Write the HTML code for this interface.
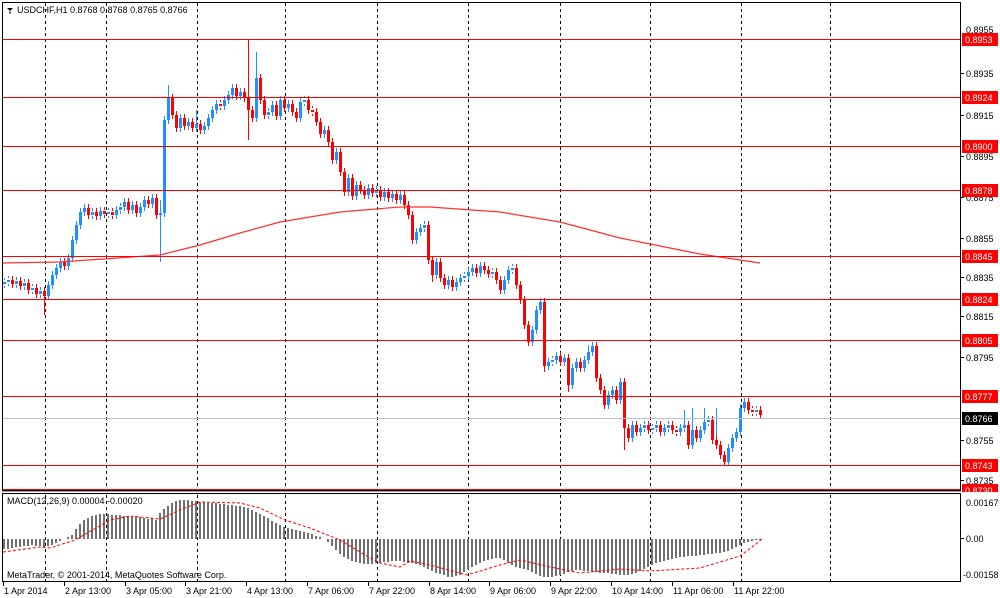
<!DOCTYPE html>
<html><head><meta charset="utf-8">
<style>
html,body{margin:0;padding:0;background:#fff;width:1000px;height:598px;overflow:hidden}
svg{display:block}
text{font-family:"Liberation Sans","DejaVu Sans",sans-serif;font-size:9px;fill:#000}
</style></head><body>
<svg width="1000" height="598" xmlns="http://www.w3.org/2000/svg">
<defs>
<path id="bb" d="M4.5 282v2M8.5 280v2M16.5 281v3M24.5 283v3M32.5 288v2M40.5 291v3M48.5 285v11M52.5 275v10M56.5 268v7M60.5 262v6M68.5 258v8M72.5 240v18M76.5 225v15M80.5 212v13M84.5 208v4M92.5 212v3M100.5 211v5M108.5 212v2M116.5 210v5M120.5 207v3M124.5 202v5M132.5 205v5M140.5 207v6M144.5 200v7M152.5 198v6M160.5 213v2M164.5 120v93M168.5 98v22M180.5 118v10M188.5 122v4M196.5 124v4M204.5 126v4M208.5 118v8M212.5 110v8M216.5 104v6M224.5 100v6M228.5 95v5M232.5 88v7M240.5 92v4M256.5 78v40M268.5 112v3M272.5 105v7M280.5 100v16M288.5 104v4M300.5 102v16M304.5 100v2M324.5 130v4M336.5 152v8M348.5 178v14M356.5 185v11M368.5 188v7M376.5 190v3M384.5 192v5M392.5 194v4M400.5 195v5M416.5 232v8M420.5 228v4M424.5 225v3M436.5 262v13M448.5 280v5M456.5 282v5M460.5 278v4M464.5 276v2M468.5 272v4M472.5 268v4M480.5 266v7M492.5 272v2M504.5 280v10M508.5 270v10M512.5 268v2M532.5 330v12M536.5 310v20M540.5 302v8M548.5 362v4M552.5 360v2M556.5 356v4M564.5 358v4M572.5 368v17M576.5 362v6M584.5 360v8M588.5 352v8M592.5 346v6M608.5 395v10M612.5 390v5M620.5 382v18M632.5 425v13M640.5 428v4M644.5 425v3M652.5 428v2M656.5 425v3M664.5 428v4M668.5 425v3M680.5 428v4M684.5 425v3M692.5 430v15M700.5 430v8M704.5 422v8M708.5 420v2M728.5 448v14M732.5 438v10M736.5 432v6M740.5 408v24M744.5 402v6M756.5 410v2"/>
<path id="rb" d="M12.5 280v4M20.5 281v5M28.5 283v7M36.5 288v6M44.5 291v5M64.5 262v4M88.5 208v7M96.5 212v4M104.5 211v3M112.5 212v3M128.5 202v8M136.5 205v8M148.5 200v4M156.5 198v17M172.5 98v17M176.5 115v13M184.5 118v8M192.5 122v6M200.5 124v6M220.5 104v2M236.5 88v8M244.5 92v6M248.5 98v12M252.5 110v8M260.5 78v22M264.5 100v15M276.5 105v11M284.5 100v8M292.5 104v8M296.5 112v6M308.5 100v10M312.5 110v2M316.5 112v10M320.5 122v12M328.5 130v12M332.5 142v18M340.5 152v20M344.5 172v20M352.5 178v18M360.5 185v5M364.5 190v5M372.5 188v5M380.5 190v7M388.5 192v6M396.5 194v6M404.5 195v10M408.5 205v10M412.5 215v25M428.5 225v35M432.5 260v15M440.5 262v16M444.5 278v7M452.5 280v7M476.5 268v5M484.5 266v4M488.5 270v4M496.5 272v8M500.5 280v10M516.5 268v17M520.5 285v15M524.5 300v25M528.5 325v17M544.5 302v64M560.5 356v6M568.5 358v27M580.5 362v6M596.5 346v32M600.5 378v12M604.5 390v15M616.5 390v10M624.5 382v46M628.5 428v10M636.5 425v7M648.5 425v5M660.5 425v7M672.5 425v5M676.5 430v2M688.5 425v20M696.5 430v8M712.5 420v20M716.5 440v5M720.5 445v10M724.5 455v7M748.5 402v8M752.5 410v2M760.5 410v5"/>
</defs>
<!-- grid -->
<g stroke="#000" stroke-dasharray="3,3">
<line x1="45.5" y1="3" x2="45.5" y2="582"/><line x1="106.5" y1="3" x2="106.5" y2="582"/><line x1="197.5" y1="3" x2="197.5" y2="582"/><line x1="285.5" y1="3" x2="285.5" y2="582"/><line x1="377.5" y1="3" x2="377.5" y2="582"/><line x1="468.5" y1="3" x2="468.5" y2="582"/><line x1="560.5" y1="3" x2="560.5" y2="582"/><line x1="650.5" y1="3" x2="650.5" y2="582"/><line x1="741.5" y1="3" x2="741.5" y2="582"/><line x1="830.5" y1="3" x2="830.5" y2="582"/>
</g>
<!-- candles -->
<g stroke="#1e90ff" fill="none">
<use href="#bb" transform="translate(0,-4)"/><use href="#bb" transform="translate(0,4)"/>
<use href="#bb" stroke-width="3"/>
<path d="M160.5 200V262M256.5 52V80M684.5 410V428M692.5 408V430M704.5 408V422M716.5 408V445M588.5 345V360M196.5 110V130M168.5 85V100"/>
</g>
<g stroke="#ff0000" fill="none">
<use href="#rb" transform="translate(0,-4)"/><use href="#rb" transform="translate(0,4)"/>
<use href="#rb" stroke-width="3"/>
<path d="M248.5 39V140M544.5 300V372M624.5 382V450M568.5 355V392M44.5 291V315M432.5 260V282"/>
</g>
<!-- MA -->
<polyline fill="none" stroke="#ff3030" stroke-width="1.2" points="2,263 60,262 160,255 200,245 240,233 280,222 340,212 400,207 430,207 500,212 560,222 620,238 700,254 760,263"/>
<!-- levels -->
<g stroke="#ff0000">
<line x1="2" y1="39.5" x2="960" y2="39.5"/><line x1="2" y1="97.5" x2="960" y2="97.5"/><line x1="2" y1="146.5" x2="960" y2="146.5"/><line x1="2" y1="190.5" x2="960" y2="190.5"/><line x1="2" y1="256.5" x2="960" y2="256.5"/><line x1="2" y1="299.5" x2="960" y2="299.5"/><line x1="2" y1="340.5" x2="960" y2="340.5"/><line x1="2" y1="396.5" x2="960" y2="396.5"/><line x1="2" y1="465.5" x2="960" y2="465.5"/><line x1="2" y1="489.5" x2="960" y2="489.5"/>
</g>
<line x1="2" y1="418.5" x2="960" y2="418.5" stroke="#c0c0c0"/>
<!-- right axis ticks -->
<g stroke="#000">
<line x1="960" y1="73.5" x2="964" y2="73.5"/><line x1="960" y1="115.5" x2="964" y2="115.5"/><line x1="960" y1="156.5" x2="964" y2="156.5"/><line x1="960" y1="197.5" x2="964" y2="197.5"/><line x1="960" y1="238.5" x2="964" y2="238.5"/><line x1="960" y1="277.5" x2="964" y2="277.5"/><line x1="960" y1="316.5" x2="964" y2="316.5"/><line x1="960" y1="357.5" x2="964" y2="357.5"/><line x1="960" y1="440.5" x2="964" y2="440.5"/><line x1="960" y1="480.5" x2="964" y2="480.5"/><line x1="960" y1="538.5" x2="964" y2="538.5"/>
</g>
<text x="966" y="33">0.8955</text><text x="966" y="77">0.8935</text><text x="966" y="119">0.8915</text><text x="966" y="160">0.8895</text><text x="966" y="201">0.8875</text><text x="966" y="242">0.8855</text><text x="966" y="281">0.8835</text><text x="966" y="320">0.8815</text><text x="966" y="361">0.8795</text><text x="966" y="403">0.8775</text><text x="966" y="444">0.8755</text><text x="966" y="484">0.8735</text>
<!-- price labels -->
<g fill="#ff0000">
<rect x="962" y="33" width="36" height="13"/><rect x="962" y="91" width="36" height="13"/><rect x="962" y="140" width="36" height="13"/><rect x="962" y="184" width="36" height="13"/><rect x="962" y="250" width="36" height="13"/><rect x="962" y="293" width="36" height="13"/><rect x="962" y="334" width="36" height="13"/><rect x="962" y="390" width="36" height="13"/><rect x="962" y="459" width="36" height="13"/><rect x="962" y="484" width="36" height="8"/>
</g>
<rect x="962" y="412" width="36" height="13" fill="#000"/>
<g style="fill:#fff">
<text x="965" y="43" style="fill:#fff">0.8953</text><text x="965" y="101" style="fill:#fff">0.8924</text><text x="965" y="150" style="fill:#fff">0.8900</text><text x="965" y="194" style="fill:#fff">0.8878</text><text x="965" y="260" style="fill:#fff">0.8845</text><text x="965" y="303" style="fill:#fff">0.8824</text><text x="965" y="344" style="fill:#fff">0.8805</text><text x="965" y="400" style="fill:#fff">0.8777</text><text x="965" y="469" style="fill:#fff">0.8743</text><text x="965" y="494" style="fill:#fff">0.8730</text><text x="965" y="422" style="fill:#fff">0.8766</text>
</g>
<rect x="0" y="491" width="961" height="2" fill="#fff"/>
<!-- MACD histogram -->
<path stroke="#707070" stroke-width="2" fill="none" d="M4 539v10M8 539v10M12 539v9M16 539v8M20 539v8M24 539v7M28 539v7M32 539v6M36 539v7M40 539v7M44 539v8M48 539v7M52 539v6M56 539v4M60 539v2M68 539v-2M72 539v-4M76 539v-10M80 539v-15M84 539v-19M88 539v-21M92 539v-23M96 539v-24M100 539v-25M104 539v-25M108 539v-25M112 539v-24M116 539v-24M120 539v-24M124 539v-23M128 539v-23M132 539v-22M136 539v-23M140 539v-22M144 539v-21M148 539v-20M152 539v-21M156 539v-19M160 539v-26M164 539v-30M168 539v-33M172 539v-36M176 539v-38M180 539v-39M184 539v-39M188 539v-39M192 539v-38M196 539v-38M200 539v-37M204 539v-37M208 539v-36M212 539v-36M216 539v-36M220 539v-35M224 539v-35M228 539v-34M232 539v-34M236 539v-33M240 539v-33M244 539v-32M248 539v-31M252 539v-29M256 539v-27M260 539v-25M264 539v-23M268 539v-21M272 539v-18M276 539v-16M280 539v-14M284 539v-12M288 539v-11M292 539v-10M296 539v-9M300 539v-8M304 539v-7M308 539v-6M312 539v-5M316 539v-3M320 539v-2M328 539v3M332 539v7M336 539v11M340 539v15M344 539v18M348 539v20M352 539v22M356 539v23M360 539v24M364 539v25M368 539v25M372 539v25M376 539v24M380 539v24M384 539v23M388 539v23M392 539v22M396 539v22M400 539v22M404 539v23M408 539v24M412 539v24M416 539v25M420 539v26M424 539v28M428 539v30M432 539v32M436 539v34M440 539v35M444 539v36M448 539v38M452 539v38M456 539v37M460 539v36M464 539v33M468 539v30M472 539v28M476 539v26M480 539v24M484 539v22M488 539v21M492 539v20M496 539v19M500 539v19M504 539v21M508 539v24M512 539v26M516 539v28M520 539v29M524 539v30M528 539v31M532 539v33M536 539v35M540 539v37M544 539v38M548 539v38M552 539v38M556 539v37M560 539v36M564 539v35M568 539v33M572 539v32M576 539v31M580 539v31M584 539v32M588 539v32M592 539v33M596 539v33M600 539v34M604 539v34M608 539v34M612 539v35M616 539v35M620 539v36M624 539v36M628 539v36M632 539v35M636 539v34M640 539v32M644 539v30M648 539v28M652 539v26M656 539v24M660 539v23M664 539v22M668 539v21M672 539v20M676 539v19M680 539v18M684 539v18M688 539v17M692 539v17M696 539v17M700 539v16M704 539v16M708 539v15M712 539v15M716 539v14M720 539v14M724 539v13M728 539v12M732 539v10M736 539v8M740 539v6M744 539v4M748 539v3M752 539v2M756 539v1M760 539v1"/>
<polyline fill="none" stroke="#ff0000" stroke-dasharray="3,2" points="3,552 40,547 50,548 75,540 110,520 130,516 160,519 180,510 200,502 240,503 260,508 285,520 310,528 340,540 365,555 380,563 400,567 410,561 430,565 467,575 500,565 520,560 550,567 580,573 620,569 650,571 700,568 740,556 755,545 762,539"/>
<!-- frames -->
<rect x="2.5" y="2.5" width="958" height="488" fill="none" stroke="#000"/>
<rect x="2.5" y="493.5" width="958" height="88" fill="none" stroke="#000"/>
<line x1="2" y1="491.5" x2="961" y2="491.5" stroke="#a0a0a0"/>
<text x="966" y="506">0.00167</text><text x="966" y="542">0.00</text><text x="963" y="578">-0.00158</text>
<text x="7" y="504">MACD(12,26,9) 0.00004 -0.00020</text>
<text x="7" y="578">MetaTrader, © 2001-2014, MetaQuotes Software Corp.</text>
<!-- header -->
<path d="M7,8 h6 l-3,3 z" fill="#000"/><line x1="10" y1="11" x2="10" y2="14" stroke="#000"/>
<text x="17" y="13">USDCHF,H1  0.8768 0.8768 0.8765 0.8766</text>
<!-- bottom labels -->
<g stroke="#000">
<line x1="3.5" y1="582" x2="3.5" y2="586"/><line x1="64.5" y1="582" x2="64.5" y2="586"/><line x1="125.5" y1="582" x2="125.5" y2="586"/><line x1="185.5" y1="582" x2="185.5" y2="586"/><line x1="246.5" y1="582" x2="246.5" y2="586"/><line x1="307.5" y1="582" x2="307.5" y2="586"/><line x1="368.5" y1="582" x2="368.5" y2="586"/><line x1="429.5" y1="582" x2="429.5" y2="586"/><line x1="489.5" y1="582" x2="489.5" y2="586"/><line x1="550.5" y1="582" x2="550.5" y2="586"/><line x1="611.5" y1="582" x2="611.5" y2="586"/><line x1="672.5" y1="582" x2="672.5" y2="586"/><line x1="733.5" y1="582" x2="733.5" y2="586"/>
</g>
<text x="4" y="594">1 Apr 2014</text><text x="65" y="594">2 Apr 13:00</text><text x="126" y="594">3 Apr 05:00</text><text x="186" y="594">3 Apr 21:00</text><text x="247" y="594">4 Apr 13:00</text><text x="308" y="594">7 Apr 06:00</text><text x="369" y="594">7 Apr 22:00</text><text x="430" y="594">8 Apr 14:00</text><text x="490" y="594">9 Apr 06:00</text><text x="551" y="594">9 Apr 22:00</text><text x="612" y="594">10 Apr 14:00</text><text x="673" y="594">11 Apr 06:00</text><text x="734" y="594">11 Apr 22:00</text>
</svg>
</body></html>
